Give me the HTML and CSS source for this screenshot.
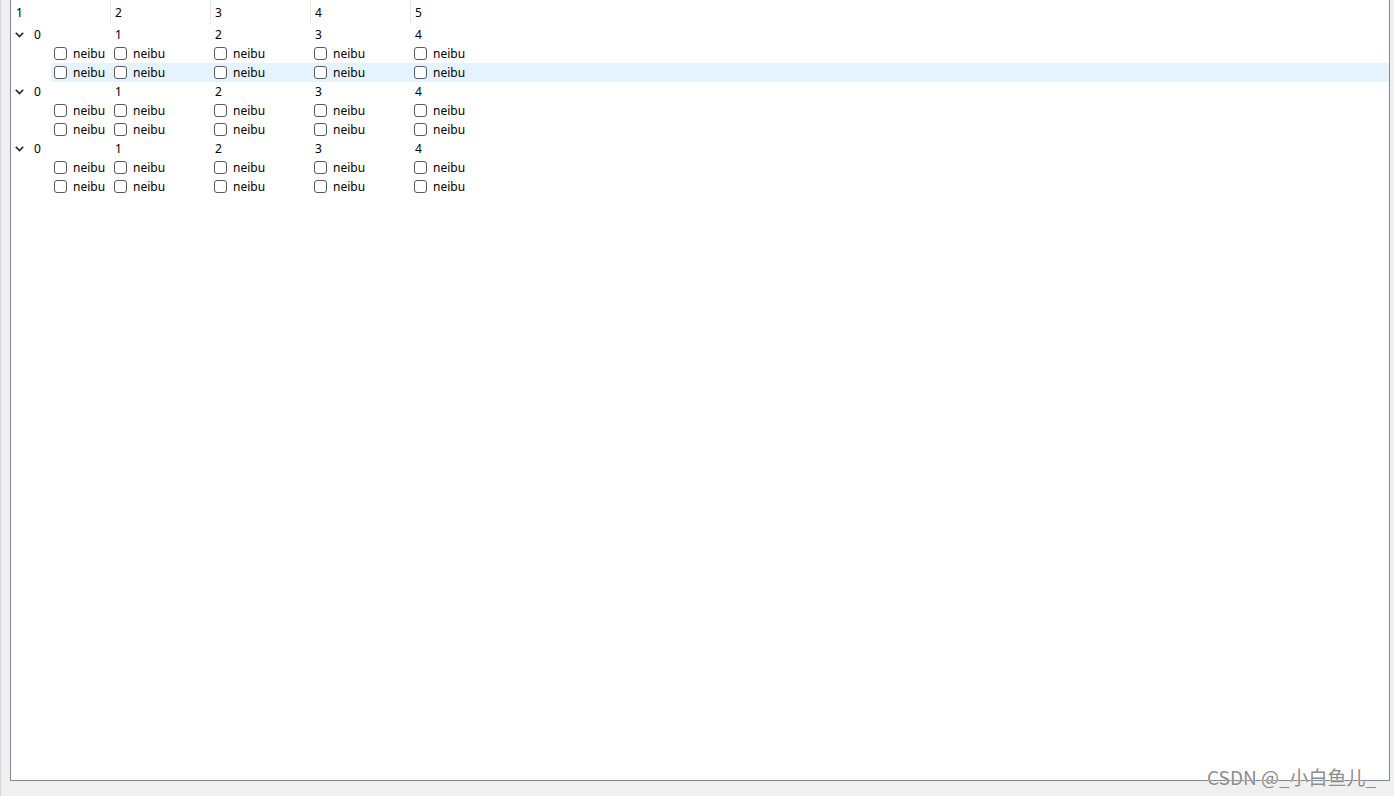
FILE: index.html
```html
<!DOCTYPE html>
<html>
<head>
<meta charset="utf-8">
<link rel="stylesheet" href="styles.css">
</head>
<body>
<div class="frame">
  <div class="header">
    <div class="hcell">1</div>
    <div class="hcell">2</div>
    <div class="hcell">3</div>
    <div class="hcell">4</div>
    <div class="hcell last">5</div>
  </div>

  <div class="row parent">
    <div class="cell first"><svg class="chev" width="9" height="6" viewBox="0 0 9 6"><path d="M0.8 0.8 L4.5 4.6 L8.2 0.8" fill="none" stroke="#222" stroke-width="1.6"/></svg><span>0</span></div>
    <div class="cell">1</div><div class="cell">2</div><div class="cell">3</div><div class="cell">4</div>
  </div>
  <div class="row child">
    <div class="cell"><span class="box"></span>neibu</div>
    <div class="cell"><span class="box"></span>neibu</div>
    <div class="cell"><span class="box"></span>neibu</div>
    <div class="cell"><span class="box"></span>neibu</div>
    <div class="cell"><span class="box"></span>neibu</div>
  </div>
  <div class="row child selected">
    <div class="cell"><span class="box"></span>neibu</div>
    <div class="cell"><span class="box"></span>neibu</div>
    <div class="cell"><span class="box"></span>neibu</div>
    <div class="cell"><span class="box"></span>neibu</div>
    <div class="cell"><span class="box"></span>neibu</div>
  </div>

  <div class="row parent">
    <div class="cell first"><svg class="chev" width="9" height="6" viewBox="0 0 9 6"><path d="M0.8 0.8 L4.5 4.6 L8.2 0.8" fill="none" stroke="#222" stroke-width="1.6"/></svg><span>0</span></div>
    <div class="cell">1</div><div class="cell">2</div><div class="cell">3</div><div class="cell">4</div>
  </div>
  <div class="row child">
    <div class="cell"><span class="box"></span>neibu</div>
    <div class="cell"><span class="box"></span>neibu</div>
    <div class="cell"><span class="box"></span>neibu</div>
    <div class="cell"><span class="box"></span>neibu</div>
    <div class="cell"><span class="box"></span>neibu</div>
  </div>
  <div class="row child">
    <div class="cell"><span class="box"></span>neibu</div>
    <div class="cell"><span class="box"></span>neibu</div>
    <div class="cell"><span class="box"></span>neibu</div>
    <div class="cell"><span class="box"></span>neibu</div>
    <div class="cell"><span class="box"></span>neibu</div>
  </div>

  <div class="row parent">
    <div class="cell first"><svg class="chev" width="9" height="6" viewBox="0 0 9 6"><path d="M0.8 0.8 L4.5 4.6 L8.2 0.8" fill="none" stroke="#222" stroke-width="1.6"/></svg><span>0</span></div>
    <div class="cell">1</div><div class="cell">2</div><div class="cell">3</div><div class="cell">4</div>
  </div>
  <div class="row child">
    <div class="cell"><span class="box"></span>neibu</div>
    <div class="cell"><span class="box"></span>neibu</div>
    <div class="cell"><span class="box"></span>neibu</div>
    <div class="cell"><span class="box"></span>neibu</div>
    <div class="cell"><span class="box"></span>neibu</div>
  </div>
  <div class="row child">
    <div class="cell"><span class="box"></span>neibu</div>
    <div class="cell"><span class="box"></span>neibu</div>
    <div class="cell"><span class="box"></span>neibu</div>
    <div class="cell"><span class="box"></span>neibu</div>
    <div class="cell"><span class="box"></span>neibu</div>
  </div>
</div>
<div class="watermark">CSDN @_小白鱼儿_</div>
</body>
</html>
```

FILE: styles.css
```css
html, body {
  margin: 0;
  padding: 0;
}
body {
  width: 1394px;
  height: 796px;
  background: #f0f0f0;
  overflow: hidden;
  position: relative;
  box-sizing: border-box;
  border-left: 1px solid #d6d6d6;
  font-family: "Noto Sans", "Liberation Sans", sans-serif;
  font-size: 12px;
  color: #000;
}
.frame {
  margin-left: 9px;
  width: 1380px;
  height: 781px;
  box-sizing: border-box;
  background: #fff;
  border-left: 1px solid #828790;
  border-right: 1px solid #828790;
  border-bottom: 1px solid #828790;
}
.header {
  display: grid;
  grid-template-columns: 100px 100px 100px 100px 100px;
  height: 25px;
}
.hcell {
  line-height: 25px;
  padding-left: 4px;
  border-right: 1px solid #e5e5e5;
  height: 24px;
}
.hcell:first-child {
  padding-left: 5px;
}
.hcell.last {
  border-right: none;
}
.row {
  display: grid;
  grid-template-columns: 100px 100px 100px 100px 100px;
  height: 19px;
  line-height: 19px;
}
.cell {
  display: flex;
  align-items: center;
  padding-left: 4px;
  white-space: nowrap;
}
.cell.first {
  padding-left: 4px;
}
.chev {
  display: block;
  margin-right: 10px;
  margin-top: 1px;
}
.row.child {
  margin-left: 40px;
  grid-template-columns: 60px 100px 100px 100px 100px;
  border-radius: 2px;
}
.row.child .cell {
  padding-left: 3px;
}
.row.selected {
  background: #e5f3ff;
}
.box {
  display: inline-block;
  width: 13px;
  height: 13px;
  box-sizing: border-box;
  border: 1px solid #5a5a5a;
  border-radius: 3px;
  background: #fff;
  margin-right: 6px;
}
.watermark {
  position: absolute;
  left: 1206px;
  top: 764px;
  font-family: "Noto Sans CJK SC", "Noto Sans", sans-serif;
  font-size: 19px;
  line-height: 26px;
  color: #8c8c8c;
  text-shadow: 0 0 1px #fff, 0 0 1px #fff;
  white-space: nowrap;
}
```
